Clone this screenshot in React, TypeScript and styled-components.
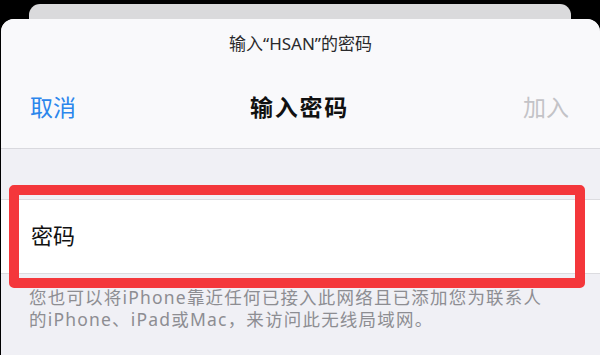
import React from "react";
import styled, { createGlobalStyle } from "styled-components";

const Global = createGlobalStyle`
  html, body { margin: 0; padding: 0; background: #000; }
  #root { width: 600px; height: 355px; overflow: hidden; }
  * { box-sizing: border-box; }
`;

const FONT = `"Noto Sans", "Noto Sans CJK SC", sans-serif`;

const Page = styled.div`
  width: 600px;
  height: 355px;
  background: #000;
  display: flex;
  flex-direction: column;
  font-family: ${FONT};
`;

const BackCard = styled.div`
  margin: 4px 29px 0 29px;
  height: 15px;
  flex: none;
  background: #dadadc;
  border-radius: 11px 11px 0 0;
`;

const Sheet = styled.div`
  flex: 1;
  margin: 0 0 0 1px;
  background: #f0f0f5;
  border-radius: 13px 13px 0 0;
  display: flex;
  flex-direction: column;
  overflow: hidden;
`;

const Header = styled.div`
  height: 130px;
  flex: none;
  background: #f9f9fb;
  border-bottom: 1px solid #d9d9de;
  display: flex;
  flex-direction: column;
  align-items: center;
`;

const Prompt = styled.div`
  margin-top: 14px;
  height: 22px;
  line-height: 22px;
  font-size: 17px;
  color: #2a2a2c;
`;

const NavBar = styled.div`
  margin-top: 37px;
  width: 100%;
  height: 30px;
  display: grid;
  grid-template-columns: 1fr auto 1fr;
  align-items: center;
  padding: 0 31px 0 29px;
`;

const NavButton = styled.div<{ $align: "left" | "right"; $disabled?: boolean }>`
  font-size: 23px;
  line-height: 30px;
  color: ${(p) => (p.$disabled ? "#c3c3c7" : "#2b86ec")};
  justify-self: ${(p) => (p.$align === "left" ? "start" : "end")};
`;

const NavTitle = styled.div`
  font-size: 23px;
  font-weight: 700;
  line-height: 30px;
  color: #111;
  letter-spacing: 1.8px;
`;

const Spacer = styled.div`
  height: 50px;
  flex: none;
`;

const CellWrap = styled.div`
  position: relative;
  flex: none;
`;

const Cell = styled.div`
  height: 75px;
  background: #fff;
  border-top: 1px solid #dcdce0;
  border-bottom: 1px solid #dcdce0;
  display: flex;
  align-items: center;
  padding: 0 0 6px 30px;
  font-size: 22px;
  color: #111;
`;

const Highlight = styled.div`
  position: absolute;
  top: -14px;
  bottom: -14px;
  left: 8px;
  right: 15px;
  border: 10px solid #f4373b;
  border-radius: 5px;
  pointer-events: none;
`;

const Footnote = styled.div`
  margin-top: 12px;
  padding-left: 28px;
  font-size: 17.5px;
  line-height: 22px;
  letter-spacing: 1.2px;
  color: #8d8d92;
`;

export default function App() {
  return (
    <>
      <Global />
      <Page>
        <BackCard />
        <Sheet>
          <Header>
            <Prompt>输入“HSAN”的密码</Prompt>
            <NavBar>
              <NavButton $align="left">取消</NavButton>
              <NavTitle>输入密码</NavTitle>
              <NavButton $align="right" $disabled>
                加入
              </NavButton>
            </NavBar>
          </Header>
          <Spacer />
          <CellWrap>
            <Cell>密码</Cell>
            <Highlight />
          </CellWrap>
          <Footnote>
            您也可以将iPhone靠近任何已接入此网络且已添加您为联系人
            <br />
            的iPhone、iPad或Mac，来访问此无线局域网。
          </Footnote>
        </Sheet>
      </Page>
    </>
  );
}
